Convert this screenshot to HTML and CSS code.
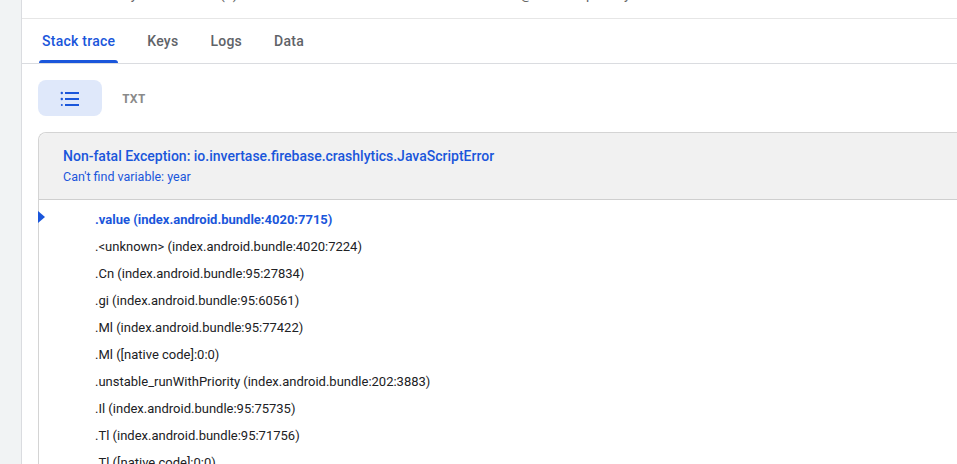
FILE: index.html
```html
<!DOCTYPE html>
<html lang="en">
<head>
<meta charset="utf-8">
<title>Stack trace</title>
<link rel="stylesheet" href="styles.css">
</head>
<body>
<div class="page">
  <aside class="rail"></aside>
  <main class="panel">
    <div class="top"><span class="cut">Issue summary </span><span class="cut c2">(1)</span><span class="cut c3">_</span><span class="cut c4">@</span><span class="cut c5">p</span><span class="cut c6">y</span></div>
    <nav class="tabs">
      <a class="tab active">Stack trace</a>
      <a class="tab">Keys</a>
      <a class="tab">Logs</a>
      <a class="tab">Data</a>
    </nav>
    <div class="toggle">
      <div class="tog on">
        <svg width="20" height="16" viewBox="0 0 20 16" aria-hidden="true">
          <g fill="#1a56db">
            <circle cx="1.8" cy="3" r="1.2"/><circle cx="1.8" cy="9" r="1.2"/><circle cx="1.8" cy="15" r="1"/>
            <rect x="5" y="2" width="14" height="2"/><rect x="5" y="8" width="14" height="2"/><rect x="5" y="14" width="14" height="2"/>
          </g>
        </svg>
      </div>
      <div class="tog txt">TXT</div>
    </div>
    <section class="trace">
      <header class="head">
        <div class="title">Non-fatal Exception: io.invertase.firebase.crashlytics.JavaScriptError</div>
        <div class="sub">Can't find variable: year</div>
      </header>
      <div class="rows">
        <div class="row hot"><span class="mark"></span>.value (index.android.bundle:4020:7715)</div>
        <div class="row">.&lt;unknown&gt; (index.android.bundle:4020:7224)</div>
        <div class="row">.Cn (index.android.bundle:95:27834)</div>
        <div class="row">.gi (index.android.bundle:95:60561)</div>
        <div class="row">.Ml (index.android.bundle:95:77422)</div>
        <div class="row">.Ml ([native code]:0:0)</div>
        <div class="row">.unstable_runWithPriority (index.android.bundle:202:3883)</div>
        <div class="row">.Il (index.android.bundle:95:75735)</div>
        <div class="row">.Tl (index.android.bundle:95:71756)</div>
        <div class="row">.Tl ([native code]:0:0)</div>
      </div>
    </section>
  </main>
</div>
</body>
</html>
```
FILE: styles.css
```css
* { box-sizing: border-box; }
html, body { margin: 0; height: 100%; overflow: hidden; background: #fff; }
body { font-family: Roboto, "Liberation Sans", sans-serif; }
.page { display: flex; width: 957px; height: 464px; overflow: hidden; }
.rail { flex: 0 0 22px; background: #f1f3f4; border-right: 1px solid #dadce0; }
.panel { flex: 1; min-width: 0; }
.top { height: 19px; border-bottom: 1px solid #e6e6e6; overflow: hidden; position: relative; }
.cut { position: absolute; left: 20px; top: -14px; font-size: 14px; color: #666; white-space: nowrap; }
.c2 { left: 198px; }
.c3 { left: 346px; font-size: 18px; top: -19px; }
.c4 { left: 498px; }
.c5 { left: 564px; }
.c6 { left: 602px; }
.tabs { display: flex; height: 45px; border-bottom: 1px solid #dadce0; padding-left: 17px; }
.tab { font-size: 14px; font-weight: 500; color: #5f6368; padding: 14px 3px 0; margin-right: 26px; letter-spacing: .25px; position: relative; }
.tab.active { color: #1a56db; }
.tab.active::after { content: ""; position: absolute; left: 0; right: 0; bottom: 0; height: 3px; background: #1a56db; border-radius: 3px 3px 0 0; }
.toggle { display: flex; align-items: center; gap: 20px; padding: 16px 0 0 16px; }
.tog.on { width: 64px; height: 36px; border-radius: 8px; background: #dfe8fa; display: flex; align-items: center; justify-content: center; }
.tog.txt { font-family: "DejaVu Sans Mono", "Liberation Mono", monospace; font-size: 13px; font-weight: 700; color: #8a8a8a; }
.trace { margin: 16px 0 0 16px; border: 1px solid #d4d4d4; border-right: 0; border-radius: 8px 0 0 0; height: 400px; }
.head { height: 67px; background: #f1f1f1; border-bottom: 1px solid #cfcfcf; padding: 14px 0 0 24px; border-radius: 8px 0 0 0; }
.title { font-size: 14px; font-weight: 500; color: #1a56db; line-height: 18px; }
.sub { font-size: 12.5px; color: #1a56db; line-height: 16px; margin-top: 4px; }
.rows { padding-top: 6px; }
.row { height: 27px; line-height: 27px; padding-left: 56px; font-size: 13px; color: #202124; position: relative; }
.row.hot { color: #1a56db; font-weight: 700; }
.mark { position: absolute; left: -1px; top: 5px; width: 0; height: 0; border-left: 7px solid #1a56db; border-top: 6.5px solid transparent; border-bottom: 6.5px solid transparent; }
```
